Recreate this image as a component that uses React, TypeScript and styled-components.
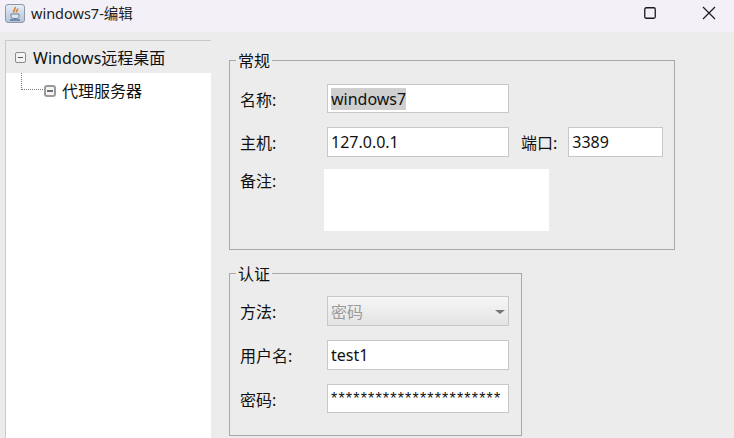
import styled, { createGlobalStyle } from "styled-components";

const Global = createGlobalStyle`
  html, body { margin: 0; padding: 0; }
  body {
    width: 734px;
    height: 438px;
    overflow: hidden;
    background: #ececec;
    font-family: "Noto Sans", "Noto Sans CJK SC", sans-serif;
    color: #111;
  }
`;

const Window = styled.div`
  width: 734px;
  height: 438px;
  display: flex;
  flex-direction: column;
  overflow: hidden;
`;

const TitleBar = styled.div`
  height: 32px;
  box-sizing: border-box;
  padding: 0 0 6px 5px;
  flex: none;
  display: flex;
  align-items: center;
  background: #f3f1f7;
`;

const AppIcon = styled.div`
  width: 20px;
  height: 19px;
  box-sizing: border-box;
  border: 1px solid #8f98a6;
  border-radius: 3px;
  background: linear-gradient(#e6edf6, #b4c4d8);
  display: flex;
  align-items: center;
  justify-content: center;
`;

const TitleText = styled.div`
  margin: -1px 0 0 6px;
  font-size: 14.500px;
  color: #222;
`;

const WindowButtons = styled.div`
  margin-left: auto;
  display: flex;
  gap: 9px;
  height: 100%;
`;

const WindowButton = styled.div`
  width: 50px;
  display: flex;
  align-items: center;
  justify-content: center;
`;

const Body = styled.div`
  flex: 1;
  display: flex;
  min-height: 0;
  padding: 8px 0 0 5px;
`;

const TreePanel = styled.div`
  width: 206px;
  flex: none;
  background: #fff;
  border-top: 1px solid #c9c9c9;
  border-left: 1px solid #c9c9c9;
  box-sizing: border-box;
  height: 400px;
`;

const TreeRow = styled.div<{ $selected?: boolean; $indent: number; $top?: number }>`
  height: 32px;
  box-sizing: border-box;
  display: flex;
  align-items: center;
  padding-left: ${p => p.$indent}px;
  padding-top: ${p => p.$top ?? 0}px;
  background: ${p => (p.$selected ? "#ececec" : "transparent")};
  position: relative;
`;

const TreeText = styled.span<{ $gap: number }>`
  font-size: 16px;
  margin-left: ${p => p.$gap}px;
`;

const ChildText = styled(TreeText)`
  margin-top: -2px;
`;

const Expander = styled.span`
  width: 11px;
  height: 11px;
  box-sizing: border-box;
  border: 1px solid #8c8c8c;
  border-radius: 2px;
  background: #f4f4f4;
  display: flex;
  align-items: center;
  justify-content: center;
  &::after {
    content: "";
    width: 5px;
    height: 1px;
    background: #555;
  }
`;

const DarkExpander = styled(Expander)`
  width: 12px;
  height: 12px;
  border: 2px solid #9a9a9a;
  border-radius: 3px;
  &::after {
    width: 6px;
    height: 2px;
    background: #707070;
  }
`;

const Connector = styled.span`
  position: absolute;
  left: 15px;
  top: 0;
  width: 22px;
  height: 17px;
  border-left: 1px dotted #777;
  border-bottom: 1px dotted #777;
  box-sizing: border-box;
`;

const Content = styled.div`
  margin-left: 18px;
  display: flex;
  flex-direction: column;
  align-items: flex-start;
  padding-top: 10px;
  gap: 13px;
`;

const Group = styled.fieldset<{ $width: number; $height: number; $pad: number }>`
  width: ${p => p.$width}px;
  height: ${p => p.$height}px;
  box-sizing: border-box;
  margin: 0;
  padding: ${p => p.$pad}px 0 0 10px;
  border: 1px solid #a8a8a8;
  display: block;
`;

const GroupTitle = styled.legend`
  font-size: 16px;
  line-height: 18px;
  padding: 2px 2px 0;
  margin-left: -4px;
`;

const Row = styled.div<{ $height: number; $gap: number }>`
  height: ${p => p.$height}px;
  margin-bottom: ${p => p.$gap}px;
  display: flex;
  align-items: center;
`;

const Label = styled.label`
  width: 87px;
  flex: none;
  font-size: 16px;
  color: #111;
`;

const Field = styled.div<{ $width: number }>`
  width: ${p => p.$width}px;
  height: 100%;
  box-sizing: border-box;
  border: 1px solid #c8c8c8;
  background: #fff;
  display: flex;
  align-items: center;
  padding-left: 3px;
  font-size: 16px;
  flex: none;
`;

const Selected = styled.span`
  background: #cfcfcf;
  line-height: 22px;
`;

const PortLabel = styled(Label)`
  width: auto;
  margin: 0 11px 0 12px;
`;

const NoteRow = styled.div`
  display: flex;
  align-items: flex-start;
`;

const NoteLabel = styled(Label)`
  width: 84px;
  margin-top: -1px;
`;

const NoteArea = styled.div`
  width: 225px;
  height: 62px;
  background: #fff;
`;

const Combo = styled(Field)`
  background: linear-gradient(#f6f6f6, #e4e4e4);
  color: #9a9a9a;
  position: relative;
`;

const ComboArrow = styled.span`
  position: absolute;
  right: 3px;
  top: 13px;
  width: 0;
  height: 0;
  border-left: 5px solid transparent;
  border-right: 5px solid transparent;
  border-top: 4px solid #777;
`;

const Stars = styled.span`
  font-family: "Liberation Sans", sans-serif;
  font-size: 16px;
  letter-spacing: 1.180px;
  white-space: nowrap;
`;

export default function App() {
  return (
    <Window>
      <Global />
      <TitleBar>
        <AppIcon>
          <svg width="14" height="15" viewBox="0 0 14 15">
            <path d="M7 1c1.500 2-2.500 3-1 5.500M9.500 2.500c1 1.500-2 2.500-1 4" stroke="#e07a1f" strokeWidth="1.500" fill="none" />
            <path d="M3 8h8v2.500c0 1.500-1.500 2-4 2s-4-.5-4-2z" fill="#dfe5ec" stroke="#5b7899" strokeWidth="0.900" />
            <path d="M2 14h10" stroke="#3f6490" strokeWidth="1.200" />
          </svg>
        </AppIcon>
        <TitleText>windows7-编辑</TitleText>
        <WindowButtons>
          <WindowButton>
            <svg width="12" height="12" viewBox="0 0 12 12">
              <rect x="0.750" y="0.750" width="10.500" height="10.500" rx="1.500" fill="none" stroke="#1a1a1a" strokeWidth="1.300" />
            </svg>
          </WindowButton>
          <WindowButton>
            <svg width="14" height="14" viewBox="0 0 14 14">
              <path d="M1 1l12 12M13 1L1 13" stroke="#1a1a1a" strokeWidth="1.200" />
            </svg>
          </WindowButton>
        </WindowButtons>
      </TitleBar>
      <Body>
        <TreePanel>
          <TreeRow $selected $indent={9}>
            <Expander />
            <TreeText $gap={7}>Windows远程桌面</TreeText>
          </TreeRow>
          <TreeRow $indent={38} $top={3}>
            <Connector />
            <DarkExpander />
            <ChildText $gap={6}>代理服务器</ChildText>
          </TreeRow>
        </TreePanel>
        <Content>
          <Group $width={446} $height={200} $pad={14}>
            <GroupTitle>常规</GroupTitle>
            <Row $height={29} $gap={14}>
              <Label>名称:</Label>
              <Field $width={182}><Selected>windows7</Selected></Field>
            </Row>
            <Row $height={30} $gap={12}>
              <Label>主机:</Label>
              <Field $width={182}>127.0.0.1</Field>
              <PortLabel>端口:</PortLabel>
              <Field $width={95}>3389</Field>
            </Row>
            <NoteRow>
              <NoteLabel>备注:</NoteLabel>
              <NoteArea />
            </NoteRow>
          </Group>
          <Group $width={293} $height={173} $pad={13}>
            <GroupTitle>认证</GroupTitle>
            <Row $height={30} $gap={14}>
              <Label>方法:</Label>
              <Combo $width={182}>密码<ComboArrow /></Combo>
            </Row>
            <Row $height={30} $gap={14}>
              <Label>用户名:</Label>
              <Field $width={182}>test1</Field>
            </Row>
            <Row $height={29} $gap={0}>
              <Label>密码:</Label>
              <Field $width={182}><Stars>***********************</Stars></Field>
            </Row>
          </Group>
        </Content>
      </Body>
    </Window>
  );
}
